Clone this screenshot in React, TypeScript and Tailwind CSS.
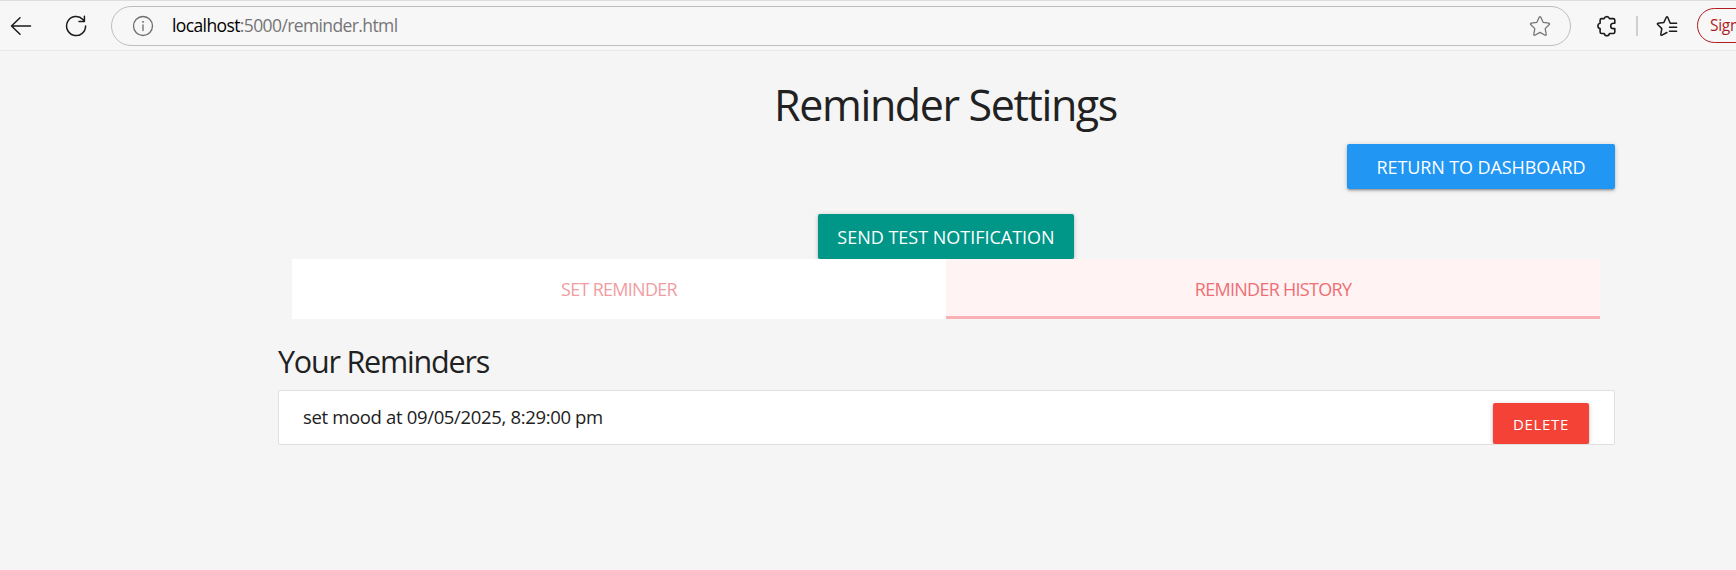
import React from "react";

function BackIcon() {
  return (
    <svg className="h-[22px] w-[22px] shrink-0" viewBox="0 0 22 22" fill="none" stroke="#1b1b1b" strokeWidth="1.5" strokeLinecap="round" strokeLinejoin="round">
      <path d="M20.5 11H1.5M10 2.7L1.5 11L10 19.3" />
    </svg>
  );
}

function ReloadIcon() {
  return (
    <svg className="h-[22px] w-[22px] shrink-0" viewBox="0 0 22 22" fill="none" stroke="#1b1b1b" strokeWidth="1.5" strokeLinecap="round" strokeLinejoin="round">
      <path d="M20.6 11A9.5 9.5 0 1 1 17.9 4.4L19.4 6.1M19.4 1.2V6.4H14" />
    </svg>
  );
}

function InfoIcon() {
  return (
    <svg className="h-[22px] w-[22px] shrink-0" viewBox="0 0 22 22" fill="none" stroke="#6e6e6e" strokeWidth="1.3" strokeLinecap="round">
      <circle cx="11" cy="11" r="9.5" />
      <path d="M11 9.8V15.5" />
      <circle cx="11" cy="6.9" r="0.6" fill="#6e6e6e" strokeWidth="0.6" />
    </svg>
  );
}

function StarIcon() {
  return (
    <svg className="h-[22px] w-[22px] shrink-0" viewBox="0 0 22 22" fill="none" stroke="#767676" strokeWidth="1.3" strokeLinejoin="round">
      <path d="M10.3 2.1Q11 1 11.7 2.1L14.1 7.3L19.9 8.2Q21 8.6 20.3 9.5L16.2 13.6L17.2 19.4Q17.2 20.6 16.1 20.2L11 17.4L5.9 20.2Q4.8 20.6 4.8 19.4L5.8 13.6L1.7 9.5Q1 8.6 2.1 8.2L7.9 7.3Z" />
    </svg>
  );
}

function ExtensionIcon() {
  return (
    <svg className="h-[22px] w-[22px] shrink-0" viewBox="0 0 22 22" fill="none" stroke="#1b1b1b" strokeWidth="1.6" strokeLinejoin="round">
      <path d="M8.2 3.6A2.7 2.7 0 0 1 13.4 3.6H17.2Q18.8 3.6 18.8 5.2V8.2H17.4A2.7 2.7 0 0 0 17.4 13.6H18.8V16.9Q18.8 18.5 17.2 18.5H13.5A2.7 2.7 0 0 1 8.2 18.5H5.7Q4.1 18.5 4.1 16.9V13.6A2.7 2.7 0 0 1 4.1 8.3V5.2Q4.1 3.6 5.7 3.6Z" />
    </svg>
  );
}

function FavoritesIcon() {
  return (
    <svg className="h-[22px] w-[22px] shrink-0" viewBox="0 0 22 22" fill="none" stroke="#1b1b1b" strokeWidth="1.5" strokeLinecap="round" strokeLinejoin="round">
      <path d="M20.6 8.2H14.2L11.7 2.3Q11 1.1 10.3 2.3L7.9 7.4L2 8.2Q0.9 8.6 1.7 9.5L5.8 13.6L4.8 19.4Q4.8 20.7 6 20.2L10.9 17.5" />
      <path d="M13.5 12.2H20.6M13.5 16.2H20.6" />
    </svg>
  );
}

function BrowserBar() {
  return (
    <header className="flex h-[51px] items-center overflow-hidden border-t border-b border-t-[#dedede] border-b-[#e9e9e9] bg-[#f7f7f7] pl-[10px]">
      <BackIcon />
      <div className="ml-[33px] flex">
        <ReloadIcon />
      </div>
      <div className="ml-6 flex h-10 w-[1460px] shrink-0 items-center rounded-full border-[1.5px] border-[#bdbdbd] pr-[19px] pl-5">
        <InfoIcon />
        <span className="ml-[18px] grow text-[17.5px] tracking-[-0.61px] whitespace-nowrap text-[#757575]">
          <span className="text-black">localhost</span>:5000/reminder.html
        </span>
        <StarIcon />
      </div>
      <div className="ml-[25px] flex">
        <ExtensionIcon />
      </div>
      <div className="ml-[18px] h-5 w-[2px] shrink-0 bg-[#cfcfcf]" />
      <div className="ml-[18px] flex">
        <FavoritesIcon />
      </div>
      <button className="ml-[19px] flex h-[35px] w-[110px] shrink-0 items-center rounded-full border border-[#b01c1f] pl-3 text-[15.5px] tracking-[-0.3px] text-[#b01c1f]">
        Sign in
      </button>
    </header>
  );
}

const raised = "shadow-[0_2px_2px_0_rgba(0,0,0,0.14),0_3px_1px_-2px_rgba(0,0,0,0.12),0_1px_5px_0_rgba(0,0,0,0.2)]";

export default function App() {
  return (
    <div className="h-[570px] w-[1736px] overflow-hidden bg-[#f5f5f5] font-['Open_Sans','Noto_Sans',sans-serif] text-[#212121]">
      <BrowserBar />
      <main className="ml-[278px] flex w-[1337px] flex-col pt-6">
        <h1 className="pr-[2px] text-center text-[43px] leading-[60px] tracking-[-1.38px]">Reminder Settings</h1>
        <button className={`mt-[9px] flex h-[45px] w-[268px] items-center justify-center self-end rounded-[2px] bg-[#2196f3] pt-[2px] text-[18px] tracking-[-0.1px] text-white ${raised}`}>
          RETURN TO DASHBOARD
        </button>
        <button className={`mt-[25px] ml-[540px] flex h-[45px] w-[256px] items-center justify-center self-start rounded-[2px] bg-[#009688] pt-[2px] text-[18px] tracking-[-0.01px] text-white ${raised}`}>
          SEND TEST NOTIFICATION
        </button>
        <nav className="relative mr-[15px] ml-[14px] grid h-[60px] grid-cols-2 bg-white text-[18px] tracking-[-0.72px]">
          <a className="flex items-center justify-center text-[#f09da2]">SET REMINDER</a>
          <a className="flex items-center justify-center border-b-[3px] border-[#f9b0b4] bg-[#fff4f3] pt-[3px] text-[#ee6e73]">REMINDER HISTORY</a>
        </nav>
        <h2 className="mt-[21px] text-[30.5px] leading-[42px] tracking-[-1.2px]">Your Reminders</h2>
        <div className="mt-2 flex h-[55px] items-start justify-between overflow-hidden rounded-[2px] border border-[#e0e0e0] bg-white pr-[25px] pl-6">
          <span className="pt-3 text-[18.5px] leading-7 tracking-[-0.34px]">set mood at 09/05/2025, 8:29:00 pm</span>
          <button className={`mt-3 flex h-[41px] w-24 items-center justify-center rounded-[2px] bg-[#f44336] pt-px text-[15px] tracking-[0.65px] text-white ${raised}`}>
            DELETE
          </button>
        </div>
      </main>
    </div>
  );
}
